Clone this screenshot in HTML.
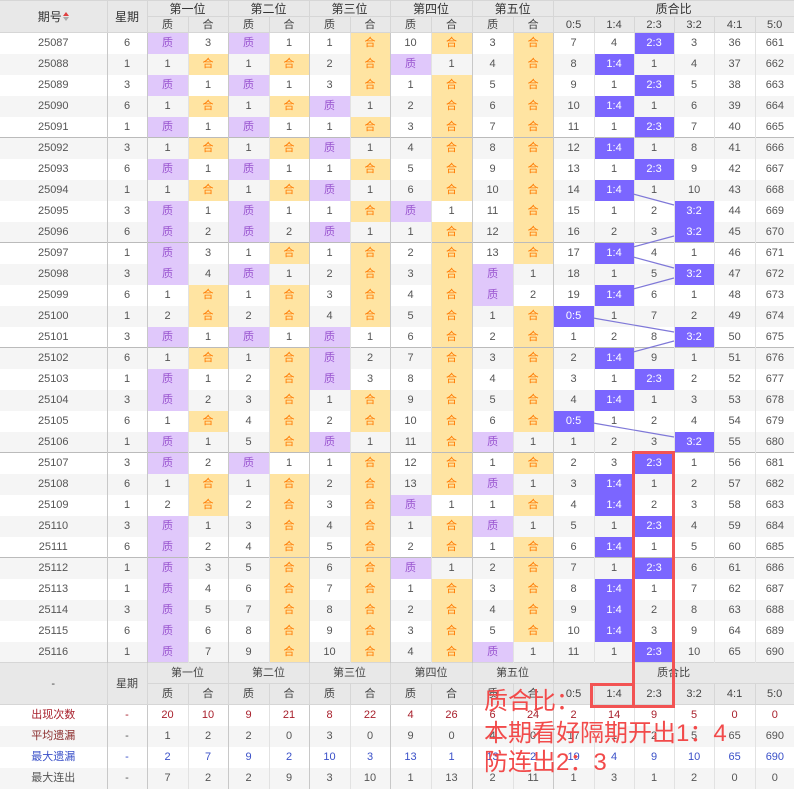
<!DOCTYPE html>
<html><head><meta charset="utf-8">
<style>
*{margin:0;padding:0;box-sizing:border-box}
body{width:794px;height:791px;overflow:hidden;background:#fff;font-family:"Liberation Sans","Noto Sans CJK SC",sans-serif;position:relative}
table{border-collapse:collapse;table-layout:fixed;width:794px;position:absolute;left:0;top:0}
td,th{text-align:center;font-size:11px;color:#555;font-weight:normal;border-left:1px solid #e2e2e2;padding:0;white-space:nowrap;overflow:hidden;line-height:12px}
tbody tr{height:21px}
tbody tr:nth-child(even) td{background:#f5f5f5}
tbody tr td:nth-child(2),tbody tr td:nth-child(3),tbody tr td:nth-child(5),tbody tr td:nth-child(7),tbody tr td:nth-child(9),tbody tr td:nth-child(11),tbody tr td:nth-child(13){border-left:1px solid #c8c8c8}
tbody tr td:first-child{border-left:none}
tbody tr.s td{border-top:1px solid #bbb}
thead th{background:#e8e8e8;color:#333;font-size:12px;border:1px solid #d6d6d6}
thead th.sub{font-size:11px;color:#444}
.hd1{height:16px}.hd2{height:16px}
td.z{background:#e0c8fb!important;color:#9a55d0}
td.h{background:#ffe4a2!important;color:#ff7a00}
td.b{background:#7b66ff!important;color:#fff}
.ft th{background:#e8e8e8;color:#444;font-size:11px;border:1px solid #d6d6d6}
.ft tr.f1{height:21px}.ft tr.f2{height:21px}
.ft tr.r{height:21px}
.ft tr.r td:first-child{border-left:none}
.ft tr.r td:nth-child(2),.ft tr.r td:nth-child(3),.ft tr.r td:nth-child(5),.ft tr.r td:nth-child(7),.ft tr.r td:nth-child(9),.ft tr.r td:nth-child(11),.ft tr.r td:nth-child(13){border-left:1px solid #c8c8c8}
.ft tr.g td{background:#f5f5f5}
.ft tr.c1 td{color:#a8202c}
.ft tr.c2 td:first-child{color:#8b2c2c}
.ft tr.c3 td{color:#3a50c8}
.arr{display:inline-block;width:6px;height:10px;position:relative;vertical-align:middle;margin-left:1px}
.arr:before{content:"";position:absolute;left:0;top:0;border-left:3px solid transparent;border-right:3px solid transparent;border-bottom:4px solid #e04040}
.arr:after{content:"";position:absolute;left:0;top:5px;border-left:3px solid transparent;border-right:3px solid transparent;border-top:4px solid #aaa}
.red{position:absolute;color:#f24a4a;font-size:24px;line-height:1;font-family:"Liberation Sans","Noto Sans CJK SC",sans-serif;white-space:nowrap}
.box{position:absolute;border:3px solid #f25353}
</style></head><body>
<table>
<colgroup><col style="width:107px"><col style="width:40px"><col style="width:41px"><col style="width:40px"><col style="width:41px"><col style="width:40px"><col style="width:41px"><col style="width:40px"><col style="width:41px"><col style="width:41px"><col style="width:41px"><col style="width:40px"><col style="width:41px"><col style="width:40px"><col style="width:40px"><col style="width:40px"><col style="width:41px"><col style="width:39px"></colgroup>
<thead>
<tr class="hd1"><th rowspan="2" style="border-left:none">期号<span class="arr"></span></th><th rowspan="2">星期</th><th colspan="2">第一位</th><th colspan="2">第二位</th><th colspan="2">第三位</th><th colspan="2">第四位</th><th colspan="2">第五位</th><th colspan="6">质合比</th></tr>
<tr class="hd2"><th class="sub">质</th><th class="sub">合</th><th class="sub">质</th><th class="sub">合</th><th class="sub">质</th><th class="sub">合</th><th class="sub">质</th><th class="sub">合</th><th class="sub">质</th><th class="sub">合</th><th class="sub">0:5</th><th class="sub">1:4</th><th class="sub">2:3</th><th class="sub">3:2</th><th class="sub">4:1</th><th class="sub">5:0</th></tr>
</thead>
<tbody>
<tr><td>25087</td><td>6</td><td class="z">质</td><td>3</td><td class="z">质</td><td>1</td><td>1</td><td class="h">合</td><td>10</td><td class="h">合</td><td>3</td><td class="h">合</td><td>7</td><td>4</td><td class="b">2:3</td><td>3</td><td>36</td><td>661</td></tr>
<tr><td>25088</td><td>1</td><td>1</td><td class="h">合</td><td>1</td><td class="h">合</td><td>2</td><td class="h">合</td><td class="z">质</td><td>1</td><td>4</td><td class="h">合</td><td>8</td><td class="b">1:4</td><td>1</td><td>4</td><td>37</td><td>662</td></tr>
<tr><td>25089</td><td>3</td><td class="z">质</td><td>1</td><td class="z">质</td><td>1</td><td>3</td><td class="h">合</td><td>1</td><td class="h">合</td><td>5</td><td class="h">合</td><td>9</td><td>1</td><td class="b">2:3</td><td>5</td><td>38</td><td>663</td></tr>
<tr><td>25090</td><td>6</td><td>1</td><td class="h">合</td><td>1</td><td class="h">合</td><td class="z">质</td><td>1</td><td>2</td><td class="h">合</td><td>6</td><td class="h">合</td><td>10</td><td class="b">1:4</td><td>1</td><td>6</td><td>39</td><td>664</td></tr>
<tr><td>25091</td><td>1</td><td class="z">质</td><td>1</td><td class="z">质</td><td>1</td><td>1</td><td class="h">合</td><td>3</td><td class="h">合</td><td>7</td><td class="h">合</td><td>11</td><td>1</td><td class="b">2:3</td><td>7</td><td>40</td><td>665</td></tr>
<tr class="s"><td>25092</td><td>3</td><td>1</td><td class="h">合</td><td>1</td><td class="h">合</td><td class="z">质</td><td>1</td><td>4</td><td class="h">合</td><td>8</td><td class="h">合</td><td>12</td><td class="b">1:4</td><td>1</td><td>8</td><td>41</td><td>666</td></tr>
<tr><td>25093</td><td>6</td><td class="z">质</td><td>1</td><td class="z">质</td><td>1</td><td>1</td><td class="h">合</td><td>5</td><td class="h">合</td><td>9</td><td class="h">合</td><td>13</td><td>1</td><td class="b">2:3</td><td>9</td><td>42</td><td>667</td></tr>
<tr><td>25094</td><td>1</td><td>1</td><td class="h">合</td><td>1</td><td class="h">合</td><td class="z">质</td><td>1</td><td>6</td><td class="h">合</td><td>10</td><td class="h">合</td><td>14</td><td class="b">1:4</td><td>1</td><td>10</td><td>43</td><td>668</td></tr>
<tr><td>25095</td><td>3</td><td class="z">质</td><td>1</td><td class="z">质</td><td>1</td><td>1</td><td class="h">合</td><td class="z">质</td><td>1</td><td>11</td><td class="h">合</td><td>15</td><td>1</td><td>2</td><td class="b">3:2</td><td>44</td><td>669</td></tr>
<tr><td>25096</td><td>6</td><td class="z">质</td><td>2</td><td class="z">质</td><td>2</td><td class="z">质</td><td>1</td><td>1</td><td class="h">合</td><td>12</td><td class="h">合</td><td>16</td><td>2</td><td>3</td><td class="b">3:2</td><td>45</td><td>670</td></tr>
<tr class="s"><td>25097</td><td>1</td><td class="z">质</td><td>3</td><td>1</td><td class="h">合</td><td>1</td><td class="h">合</td><td>2</td><td class="h">合</td><td>13</td><td class="h">合</td><td>17</td><td class="b">1:4</td><td>4</td><td>1</td><td>46</td><td>671</td></tr>
<tr><td>25098</td><td>3</td><td class="z">质</td><td>4</td><td class="z">质</td><td>1</td><td>2</td><td class="h">合</td><td>3</td><td class="h">合</td><td class="z">质</td><td>1</td><td>18</td><td>1</td><td>5</td><td class="b">3:2</td><td>47</td><td>672</td></tr>
<tr><td>25099</td><td>6</td><td>1</td><td class="h">合</td><td>1</td><td class="h">合</td><td>3</td><td class="h">合</td><td>4</td><td class="h">合</td><td class="z">质</td><td>2</td><td>19</td><td class="b">1:4</td><td>6</td><td>1</td><td>48</td><td>673</td></tr>
<tr><td>25100</td><td>1</td><td>2</td><td class="h">合</td><td>2</td><td class="h">合</td><td>4</td><td class="h">合</td><td>5</td><td class="h">合</td><td>1</td><td class="h">合</td><td class="b">0:5</td><td>1</td><td>7</td><td>2</td><td>49</td><td>674</td></tr>
<tr><td>25101</td><td>3</td><td class="z">质</td><td>1</td><td class="z">质</td><td>1</td><td class="z">质</td><td>1</td><td>6</td><td class="h">合</td><td>2</td><td class="h">合</td><td>1</td><td>2</td><td>8</td><td class="b">3:2</td><td>50</td><td>675</td></tr>
<tr class="s"><td>25102</td><td>6</td><td>1</td><td class="h">合</td><td>1</td><td class="h">合</td><td class="z">质</td><td>2</td><td>7</td><td class="h">合</td><td>3</td><td class="h">合</td><td>2</td><td class="b">1:4</td><td>9</td><td>1</td><td>51</td><td>676</td></tr>
<tr><td>25103</td><td>1</td><td class="z">质</td><td>1</td><td>2</td><td class="h">合</td><td class="z">质</td><td>3</td><td>8</td><td class="h">合</td><td>4</td><td class="h">合</td><td>3</td><td>1</td><td class="b">2:3</td><td>2</td><td>52</td><td>677</td></tr>
<tr><td>25104</td><td>3</td><td class="z">质</td><td>2</td><td>3</td><td class="h">合</td><td>1</td><td class="h">合</td><td>9</td><td class="h">合</td><td>5</td><td class="h">合</td><td>4</td><td class="b">1:4</td><td>1</td><td>3</td><td>53</td><td>678</td></tr>
<tr><td>25105</td><td>6</td><td>1</td><td class="h">合</td><td>4</td><td class="h">合</td><td>2</td><td class="h">合</td><td>10</td><td class="h">合</td><td>6</td><td class="h">合</td><td class="b">0:5</td><td>1</td><td>2</td><td>4</td><td>54</td><td>679</td></tr>
<tr><td>25106</td><td>1</td><td class="z">质</td><td>1</td><td>5</td><td class="h">合</td><td class="z">质</td><td>1</td><td>11</td><td class="h">合</td><td class="z">质</td><td>1</td><td>1</td><td>2</td><td>3</td><td class="b">3:2</td><td>55</td><td>680</td></tr>
<tr class="s"><td>25107</td><td>3</td><td class="z">质</td><td>2</td><td class="z">质</td><td>1</td><td>1</td><td class="h">合</td><td>12</td><td class="h">合</td><td>1</td><td class="h">合</td><td>2</td><td>3</td><td class="b">2:3</td><td>1</td><td>56</td><td>681</td></tr>
<tr><td>25108</td><td>6</td><td>1</td><td class="h">合</td><td>1</td><td class="h">合</td><td>2</td><td class="h">合</td><td>13</td><td class="h">合</td><td class="z">质</td><td>1</td><td>3</td><td class="b">1:4</td><td>1</td><td>2</td><td>57</td><td>682</td></tr>
<tr><td>25109</td><td>1</td><td>2</td><td class="h">合</td><td>2</td><td class="h">合</td><td>3</td><td class="h">合</td><td class="z">质</td><td>1</td><td>1</td><td class="h">合</td><td>4</td><td class="b">1:4</td><td>2</td><td>3</td><td>58</td><td>683</td></tr>
<tr><td>25110</td><td>3</td><td class="z">质</td><td>1</td><td>3</td><td class="h">合</td><td>4</td><td class="h">合</td><td>1</td><td class="h">合</td><td class="z">质</td><td>1</td><td>5</td><td>1</td><td class="b">2:3</td><td>4</td><td>59</td><td>684</td></tr>
<tr><td>25111</td><td>6</td><td class="z">质</td><td>2</td><td>4</td><td class="h">合</td><td>5</td><td class="h">合</td><td>2</td><td class="h">合</td><td>1</td><td class="h">合</td><td>6</td><td class="b">1:4</td><td>1</td><td>5</td><td>60</td><td>685</td></tr>
<tr class="s"><td>25112</td><td>1</td><td class="z">质</td><td>3</td><td>5</td><td class="h">合</td><td>6</td><td class="h">合</td><td class="z">质</td><td>1</td><td>2</td><td class="h">合</td><td>7</td><td>1</td><td class="b">2:3</td><td>6</td><td>61</td><td>686</td></tr>
<tr><td>25113</td><td>1</td><td class="z">质</td><td>4</td><td>6</td><td class="h">合</td><td>7</td><td class="h">合</td><td>1</td><td class="h">合</td><td>3</td><td class="h">合</td><td>8</td><td class="b">1:4</td><td>1</td><td>7</td><td>62</td><td>687</td></tr>
<tr><td>25114</td><td>3</td><td class="z">质</td><td>5</td><td>7</td><td class="h">合</td><td>8</td><td class="h">合</td><td>2</td><td class="h">合</td><td>4</td><td class="h">合</td><td>9</td><td class="b">1:4</td><td>2</td><td>8</td><td>63</td><td>688</td></tr>
<tr><td>25115</td><td>6</td><td class="z">质</td><td>6</td><td>8</td><td class="h">合</td><td>9</td><td class="h">合</td><td>3</td><td class="h">合</td><td>5</td><td class="h">合</td><td>10</td><td class="b">1:4</td><td>3</td><td>9</td><td>64</td><td>689</td></tr>
<tr><td>25116</td><td>1</td><td class="z">质</td><td>7</td><td>9</td><td class="h">合</td><td>10</td><td class="h">合</td><td>4</td><td class="h">合</td><td class="z">质</td><td>1</td><td>11</td><td>1</td><td class="b">2:3</td><td>10</td><td>65</td><td>690</td></tr>
</tbody>
<tbody class="ft">
<tr class="f1"><th rowspan="2" style="border-left:none">-</th><th rowspan="2">星期</th><th colspan="2">第一位</th><th colspan="2">第二位</th><th colspan="2">第三位</th><th colspan="2">第四位</th><th colspan="2">第五位</th><th colspan="6">质合比</th></tr>
<tr class="f2"><th>质</th><th>合</th><th>质</th><th>合</th><th>质</th><th>合</th><th>质</th><th>合</th><th>质</th><th>合</th><th>0:5</th><th>1:4</th><th>2:3</th><th>3:2</th><th>4:1</th><th>5:0</th></tr>
<tr class="r c1"><td>出现次数</td><td>-</td><td>20</td><td>10</td><td>9</td><td>21</td><td>8</td><td>22</td><td>4</td><td>26</td><td>6</td><td>24</td><td>2</td><td>14</td><td>9</td><td>5</td><td>0</td><td>0</td></tr>
<tr class="r g c2"><td>平均遗漏</td><td>-</td><td>1</td><td>2</td><td>2</td><td>0</td><td>3</td><td>0</td><td>9</td><td>0</td><td>4</td><td>0</td><td>17</td><td>1</td><td>2</td><td>5</td><td>65</td><td>690</td></tr>
<tr class="r c3"><td>最大遗漏</td><td>-</td><td>2</td><td>7</td><td>9</td><td>2</td><td>10</td><td>3</td><td>13</td><td>1</td><td>13</td><td>2</td><td>19</td><td>4</td><td>9</td><td>10</td><td>65</td><td>690</td></tr>
<tr class="r g"><td>最大连出</td><td>-</td><td>7</td><td>2</td><td>2</td><td>9</td><td>3</td><td>10</td><td>1</td><td>13</td><td>2</td><td>11</td><td>1</td><td>3</td><td>1</td><td>2</td><td>0</td><td>0</td></tr>
</tbody>
</table>
<svg width="794" height="791" style="position:absolute;left:0;top:0;pointer-events:none">
<g stroke="#7f78d8" stroke-width="1.2" fill="none">
<line x1="633" y1="194" x2="674" y2="205"/>
<line x1="674" y1="236" x2="633" y2="247"/>
<line x1="633" y1="257" x2="674" y2="268"/>
<line x1="674" y1="278" x2="633" y2="289"/>
<line x1="593" y1="318" x2="674" y2="332"/>
<line x1="674" y1="341" x2="633" y2="352"/>
<line x1="593" y1="423" x2="674" y2="437"/>
</g>
</svg>
<div class="box" style="left:632px;top:451px;width:43px;height:257px"></div>
<div class="box" style="left:590px;top:683px;width:45px;height:25px"></div>
<div class="red" style="left:484px;top:690px">质合比：</div>
<div class="red" style="left:484px;top:722px">本期看好隔期开出1：4</div>
<div class="red" style="left:484px;top:751px">防连出2：3</div>
</body></html>
